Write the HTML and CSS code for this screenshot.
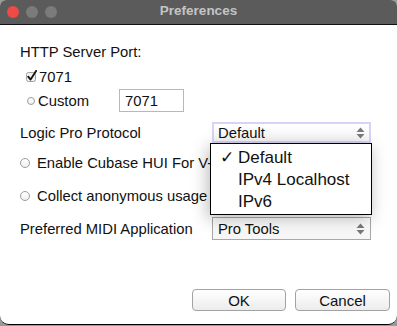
FILE: index.html
```html
<!DOCTYPE html>
<html>
<head>
<meta charset="utf-8">
<link rel="stylesheet" href="styles.css">
</head>
<body>
<div class="window">
  <div class="titlebar">
    <div class="lights">
      <span class="light red"></span>
      <span class="light gray"></span>
      <span class="light gray"></span>
    </div>
    <div class="title">Preferences</div>
  </div>
  <div class="content">
    <div class="row heading">HTTP Server Port:</div>
    <div class="row option check-row">
      <svg class="checkbox" width="11" height="12" viewBox="0 0 11 12">
        <rect x="0.5" y="2.5" width="9" height="9" rx="2" fill="#f2f2f2" stroke="#a0a0a0"/>
        <path d="M2.2 6.6 L4.6 9.6 L10.2 0.8" fill="none" stroke="#111" stroke-width="1.8" stroke-linecap="round" stroke-linejoin="round"/>
      </svg>
      <span>7071</span>
    </div>
    <div class="row option custom-row">
      <span class="radio small"></span>
      <span class="custom-label">Custom</span>
      <span class="textfield">7071</span>
    </div>
    <div class="row field protocol-row">
      <span class="label">Logic Pro Protocol</span>
      <div class="select focused">
        <span>Default</span>
        <svg class="arrows" width="9" height="12" viewBox="0 0 9 12"><path d="M4.5 0.5 L8.5 5 L0.5 5 Z M4.5 11.5 L8.5 7 L0.5 7 Z" fill="#7a7a7a"/></svg>
      </div>
    </div>
    <div class="row radio-row cubase-row">
      <span class="radio"></span>
      <span>Enable Cubase HUI For V-Control Pro</span>
    </div>
    <div class="row radio-row collect-row">
      <span class="radio"></span>
      <span>Collect anonymous usage statistics</span>
    </div>
    <div class="row field midi-row">
      <span class="label">Preferred MIDI Application</span>
      <div class="select">
        <span>Pro Tools</span>
        <svg class="arrows" width="9" height="12" viewBox="0 0 9 12"><path d="M4.5 0.5 L8.5 5 L0.5 5 Z M4.5 11.5 L8.5 7 L0.5 7 Z" fill="#7a7a7a"/></svg>
      </div>
    </div>
    <div class="buttons">
      <button class="btn ok">OK</button>
      <button class="btn cancel">Cancel</button>
    </div>
    <div class="menu">
      <div class="item"><span class="tick">✓</span>Default</div>
      <div class="item">IPv4 Localhost</div>
      <div class="item">IPv6</div>
    </div>
  </div>
</div>
</body>
</html>
```

FILE: styles.css
```css
html, body {
  margin: 0;
  padding: 0;
}
body {
  background: #9a9a9a;
  width: 397px;
  height: 326px;
  overflow: hidden;
  font-family: "Liberation Sans", Arial, sans-serif;
  color: #111;
}
.window {
  width: 397px;
  height: 324px;
  background: #fff;
  border-radius: 6px 6px 9px 9px;
  border-bottom: 1px solid #000;
  overflow: hidden;
}
.titlebar {
  height: 24px;
  background: #5b5b5b;
  border-bottom: 1px solid #111;
  display: flex;
  align-items: center;
  position: relative;
}
.lights {
  display: flex;
  gap: 7px;
  padding-left: 7px;
}
.light {
  width: 12px;
  height: 12px;
  border-radius: 50%;
  display: block;
}
.light.red { background: #ee4a46; }
.light.gray { background: #7b7b7b; }
.title {
  position: absolute;
  left: 0;
  right: 0;
  text-align: center;
  font-weight: bold;
  font-size: 13.5px;
  color: #c4c4c4;
  top: 3px;
}
.content {
  position: relative;
  padding: 19px 0 0 20px;
  font-size: 14.8px;
  line-height: 16px;
}
.row {
  display: flex;
  align-items: center;
}
.heading { height: 16px; }
.check-row {
  margin-top: 9px;
  height: 16px;
  padding-left: 6px;
}
.checkbox { margin-right: 2px; margin-top: -2px; }
.radio {
  width: 8px;
  height: 8px;
  border: 1px solid #9c9c9c;
  border-radius: 50%;
  background: linear-gradient(#fff, #f0f0f0);
  display: block;
  flex: none;
}
.radio.small {
  width: 6px;
  height: 6px;
}
.custom-row {
  margin-top: 4px;
  height: 23px;
  padding-left: 7px;
}
.custom-row .radio { margin-right: 3px; }
.custom-label { width: 81px; }
.textfield {
  width: 58px;
  height: 21px;
  border: 1px solid #b8b8b8;
  padding-left: 5px;
  display: flex;
  align-items: center;
}
.field .label { width: 192px; flex: none; }
.protocol-row { margin-top: 10px; height: 21px; }
.midi-row { margin-top: 13px; height: 23px; }
.select {
  width: 159px;
  height: 100%;
  box-sizing: border-box;
  border: 1px solid #a8a8a8;
  background: linear-gradient(#ffffff, #f6f6f6);
  display: flex;
  align-items: center;
  justify-content: space-between;
  padding: 0 5px 0 5px;
}
.select.focused {
  border: 2px solid #d6d3f7;
  padding-left: 4px;
  padding-right: 4px;
}
.arrows { display: block; }
.radio-row { height: 16px; }
.radio-row .radio { margin-right: 7px; }
.cubase-row { margin-top: 12px; }
.collect-row { margin-top: 17px; }
.buttons {
  display: flex;
  justify-content: flex-end;
  gap: 9px;
  margin-top: 49px;
  padding-right: 7px;
}
.btn {
  height: 22px;
  border: 1px solid #a2a2a2;
  border-radius: 4px;
  background: linear-gradient(#ffffff, #ececec);
  font-family: "Liberation Sans", Arial, sans-serif;
  font-size: 15px;
  color: #111;
  padding: 0;
}
.btn.ok { width: 94px; }
.btn.cancel { width: 95px; }
.menu {
  position: absolute;
  left: 210px;
  top: 118px;
  width: 160px;
  background: #fff;
  border: 1px solid #000;
  box-shadow: -2px 4px 16px rgba(0,0,0,0.28);
  padding-top: 3px;
  box-sizing: content-box;
  height: 67px;
  font-size: 17px;
  line-height: 22px;
}
.item {
  padding-left: 27px;
  position: relative;
  white-space: nowrap;
}
.tick {
  position: absolute;
  left: 9px;
  top: 0;
}
```
